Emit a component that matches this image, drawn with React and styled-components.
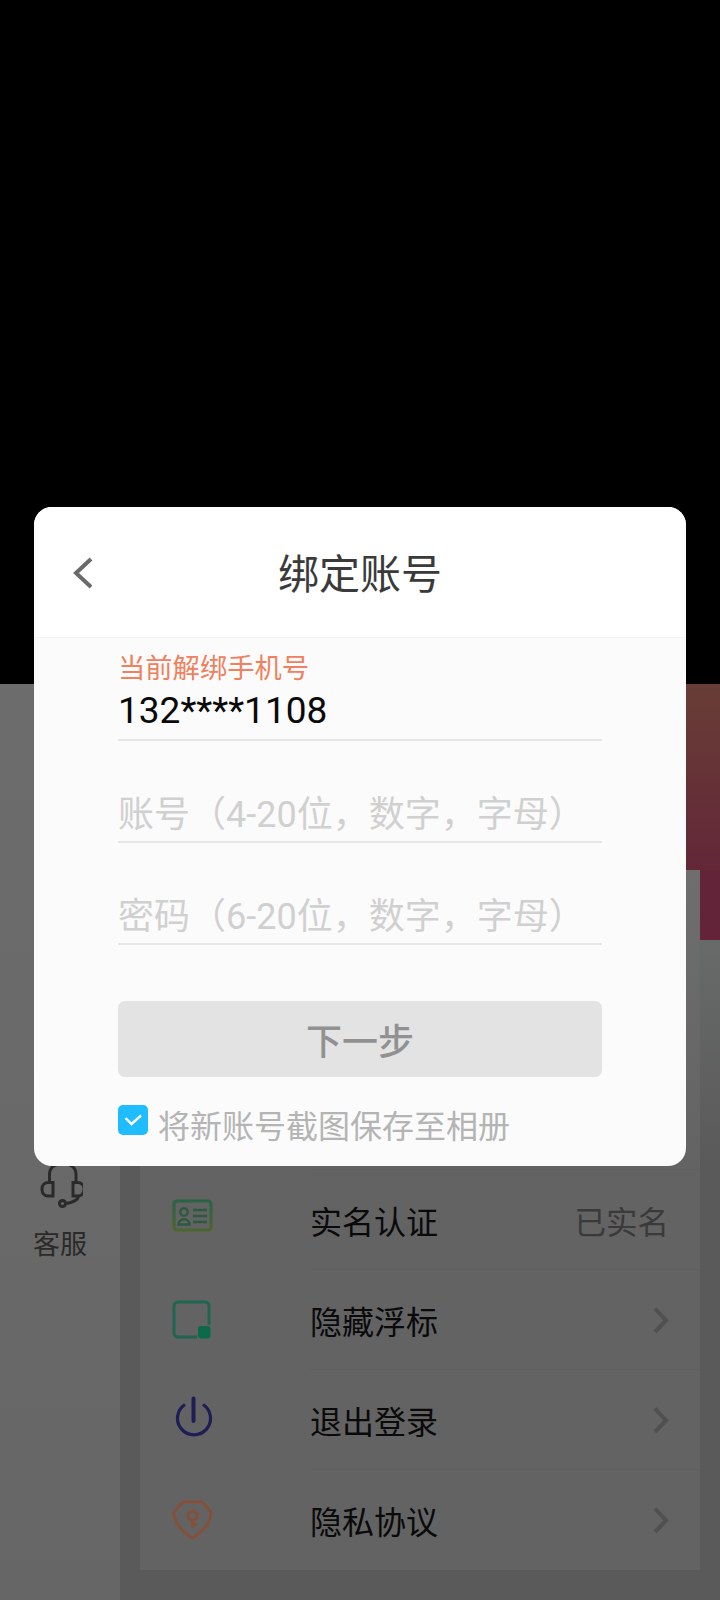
import React from "react";
import styled, { createGlobalStyle } from "styled-components";

const Global = createGlobalStyle`
  html, body { margin: 0; padding: 0; background: #000; }
  * { box-sizing: border-box; }
`;
const CJK = `"Noto Sans CJK SC", "Roboto", sans-serif`;
const LATIN_FIRST = `"Roboto", "Noto Sans CJK SC", sans-serif`;

const Screen = styled.div`
  position: relative;
  width: 720px;
  height: 1600px;
  overflow: hidden;
  display: flex;
  flex-direction: column;
  font-family: ${CJK};
  background: #000;
`;
const TopBlack = styled.div`
  flex: 0 0 684px;
`;
const Page = styled.div`
  flex: 1;
  display: flex;
  background: #5a5a5a;
`;
const Sidebar = styled.div`
  flex: 0 0 120px;
  background: linear-gradient(180deg, #6c6c6c 0, #666 100%);
  display: flex;
  flex-direction: column;
  align-items: center;
  padding-top: 476px;
  color: #2a2a2a;
`;
const SideLabel = styled.div`
  font-size: 27px;
  line-height: 36px;
  margin-top: 15px;
`;
const Main = styled.div`
  flex: 1;
  margin-left: 20px;
  display: flex;
  flex-direction: column;
`;
const Banner = styled.div`
  flex: 0 0 186px;
  background: linear-gradient(180deg, #683d36 0%, #632738 100%);
`;
const Lower = styled.div`
  display: flex;
  flex: 1;
  align-items: flex-start;
`;
const Card = styled.div`
  flex: 0 0 560px;
  padding-top: 300px;
  background: linear-gradient(180deg, #6e6e6e 0, #636363 300px);
`;
const RightEdge = styled.div`
  flex: 1;
  display: flex;
  flex-direction: column;
  align-self: stretch;
`;
const BannerEnd = styled.div`
  flex: 0 0 70px;
  background: #63243a;
`;
const Gutter = styled.div`
  flex: 1;
  background: linear-gradient(180deg, #686969 0, #5a5a5a 226px);
`;
const Row = styled.div`
  height: 100px;
  display: flex;
  align-items: center;
  padding-left: 31px;
`;
const IconSlot = styled.div`
  flex: 0 0 42px;
  display: flex;
  justify-content: center;
`;
const RowBody = styled.div`
  flex: 1;
  height: 100%;
  margin-left: 97px;
  padding-right: 31px;
  display: flex;
  align-items: center;
  justify-content: space-between;
  border-bottom: ${(p) => (p.$last ? "none" : "1px solid #5f5f5f")};
  box-shadow: ${(p) => (p.$first ? "0 -2px 0 -1px #5f5f5f" : "none")};
`;
const RowText = styled.div`
  font-size: 32px;
  color: #0a0a0a;
`;
const RowValue = styled.div`
  font-size: 31.500px;
  color: #3a3a3a;
`;
const Dialog = styled.div`
  position: absolute;
  left: 34px;
  top: 507px;
  width: 652px;
  height: 659px;
  border-radius: 18px;
  overflow: hidden;
  background: #fbfbfb;
  display: flex;
  flex-direction: column;
`;
const Header = styled.div`
  flex: 0 0 131px;
  background: #fff;
  border-bottom: 1px solid #f3f3f3;
  padding-bottom: 3px;
  display: flex;
  align-items: center;
  justify-content: center;
  position: relative;
`;
const Back = styled.svg`
  position: absolute;
  left: 37px;
  top: 48px;
`;
const Title = styled.div`
  font-size: 41px;
  color: #3a3a3a;
`;
const Body = styled.div`
  flex: 1;
  padding: 12px 84px 0;
  display: flex;
  flex-direction: column;
`;
const Hint = styled.div`
  font-size: 27.300px;
  line-height: 32px;
  color: #f0805e;
`;
const Field = styled.div`
  height: ${(p) => p.$h}px;
  border-bottom: 2px solid #e7e7e7;
  display: flex;
  align-items: flex-end;
  padding-bottom: ${(p) => p.$pb}px;
  font-family: ${LATIN_FIRST};
  font-size: ${(p) => (p.$value ? 37 : 36)}px;
  line-height: 44px;
  color: ${(p) => (p.$value ? "#0a0a0a" : "#d0d0d0")};
  white-space: nowrap;
`;
const NextButton = styled.div`
  margin-top: 56px;
  height: 76px;
  border-radius: 7px;
  background: #e3e3e3;
  color: #919191;
  font-size: 36px;
  font-weight: 500;
  display: flex;
  align-items: center;
  justify-content: center;
`;
const CheckRow = styled.div`
  margin-top: 28px;
  display: flex;
  align-items: flex-start;
  gap: 10px;
`;
const CheckLabel = styled.div`
  margin-top: 2px;
  font-size: 32px;
  line-height: 34px;
  color: #b4b4b4;
`;
const Box = styled.div`
  flex: 0 0 30px;
  height: 30px;
  border-radius: 5px;
  background: #1fbcff;
  display: flex;
`;

const Chevron = () => (
  <svg width="18" height="28" viewBox="0 0 18 28" fill="none">
    <path d="M4 2.500 15 14.500 4 26" stroke="#505050" strokeWidth="4" />
  </svg>
);
const Headset = () => (
  <svg width="46" height="50" viewBox="-3 0 46 50" fill="none" stroke="#2a2a2a" strokeWidth="3">
    <path d="M9.500 22V14C9.500 0 36 0 36 14V22" />
    <path d="M13 22.500H8a6 6 0 0 0-6 6V30a6 6 0 0 0 6 6H13z" />
    <path d="M33 22.500H38a6 6 0 0 1 6 6V30a6 6 0 0 1-6 6H33z" />
    <path d="M38 37c0 3-6 6-13 6.500" />
    <circle cx="22.500" cy="43.500" r="3" />
  </svg>
);
const IdCard = () => (
  <svg width="42" height="42" viewBox="0 0 42 42" fill="none">
    <defs>
      <linearGradient id="idg" x1="0" y1="0" x2="0" y2="1">
        <stop offset="0" stopColor="#286444" />
        <stop offset="1" stopColor="#4a6630" />
      </linearGradient>
    </defs>
    <rect x="3" y="2" width="37" height="29" rx="3" stroke="url(#idg)" strokeWidth="3.200" />
    <circle cx="13" cy="13" r="3.800" stroke="#2c5a41" strokeWidth="2.400" />
    <path d="M7.500 25.500c0-7 11-7 11 0z" stroke="#2c5a41" strokeWidth="2.400" />
    <path d="M22 11h14M22 17h14M22 23h14" stroke="#2c5a41" strokeWidth="2.400" />
  </svg>
);
const Float = () => (
  <svg width="42" height="42" viewBox="0 0 42 42" fill="none">
    <path d="M26 38H7a4 4 0 0 1-4-4V7a4 4 0 0 1 4-4H34a4 4 0 0 1 4 4V26" stroke="#1f6650" strokeWidth="3" />
    <rect x="27" y="27" width="12.500" height="12.500" rx="3" fill="#0a6a49" />
  </svg>
);
const Power = () => (
  <svg width="42" height="48" viewBox="0 0 42 48" fill="none" stroke="#1e1e55" strokeWidth="3.200">
    <path d="M14 8.500a16.500 16.500 0 1 0 18 0" />
    <path d="M22.500 2.500V25" strokeWidth="4" strokeLinecap="round" />
  </svg>
);
const Shield = () => (
  <svg width="42" height="42" viewBox="0 0 42 42" fill="none" stroke="#84503a" strokeWidth="3">
    <path d="M12 3H31L40 13C40 24 31 33 21.500 39C12 33 3 24 3 13Z" />
    <circle cx="21.500" cy="16.500" r="4.500" />
    <path d="M21.500 21V29M21.500 25.500H26" />
  </svg>
);

const rows = [
  { icon: <IdCard />, text: "实名认证", value: "已实名", first: true },
  { icon: <Float />, text: "隐藏浮标" },
  { icon: <Power />, text: "退出登录" },
  { icon: <Shield />, text: "隐私协议", last: true },
];

export default function App() {
  return (
    <Screen>
      <Global />
      <TopBlack />
      <Page>
        <Sidebar>
          <Headset />
          <SideLabel>客服</SideLabel>
        </Sidebar>
        <Main>
          <Banner />
          <Lower>
            <Card>
              {rows.map((r) => (
                <Row key={r.text}>
                  <IconSlot>{r.icon}</IconSlot>
                  <RowBody $last={r.last} $first={r.first}>
                    <RowText>{r.text}</RowText>
                    {r.value ? <RowValue>{r.value}</RowValue> : <Chevron />}
                  </RowBody>
                </Row>
              ))}
            </Card>
            <RightEdge>
              <BannerEnd />
              <Gutter />
            </RightEdge>
          </Lower>
        </Main>
      </Page>
      <Dialog>
        <Header>
          <Back width="24" height="36" viewBox="0 0 24 36" fill="none">
            <path d="M20 4 5 18l15 14" stroke="#6a6a6a" strokeWidth="4" />
          </Back>
          <Title>绑定账号</Title>
        </Header>
        <Body>
          <Hint>当前解绑手机号</Hint>
          <Field $value $h={59} $pb={6}>132****1108</Field>
          <Field $h={102} $pb={4}>账号（4-20位，数字，字母）</Field>
          <Field $h={102} $pb={4}>密码（6-20位，数字，字母）</Field>
          <NextButton>下一步</NextButton>
          <CheckRow>
            <Box>
              <svg width="30" height="30" viewBox="0 0 30 30" fill="none">
                <path d="M7.500 13l6 6L23 10.500" stroke="#fff" strokeWidth="2.400" />
              </svg>
            </Box>
            <CheckLabel>将新账号截图保存至相册</CheckLabel>
          </CheckRow>
        </Body>
      </Dialog>
    </Screen>
  );
}
